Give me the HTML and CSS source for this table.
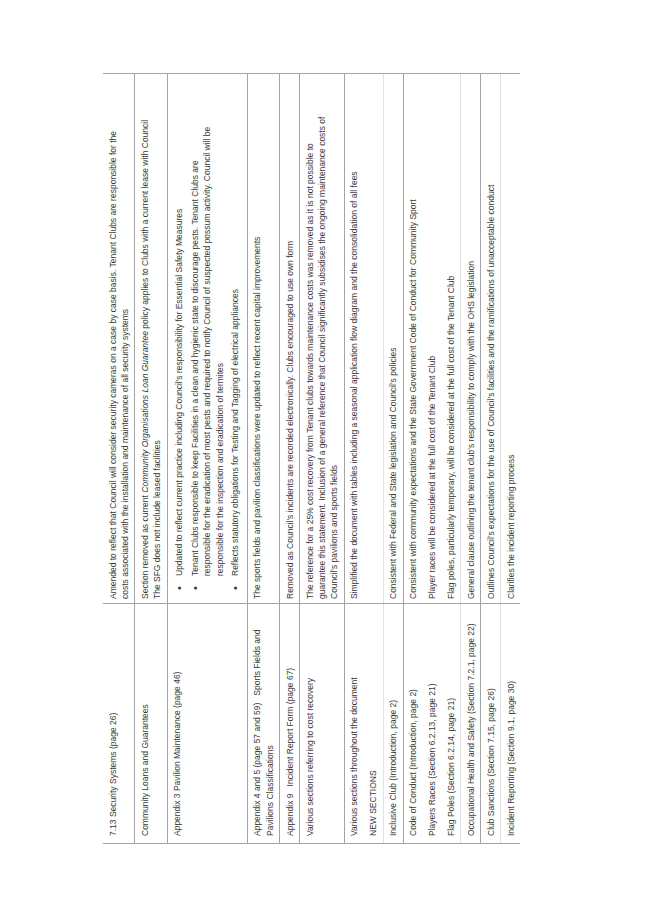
FILE: index.html
```html
<!DOCTYPE html>
<html lang="en">
<head>
<meta charset="utf-8">
<title>Changes</title>
<link rel="stylesheet" href="styles.css">
</head>
<body>
<div class="page">
  <div class="sheet">
    <table class="changes">
      <colgroup><col class="c-item"><col class="c-desc"></colgroup>
      <tbody>
        <tr>
          <td>7.13 Security Systems (page 26)</td>
          <td>Amended to reflect that Council will consider security cameras on a case by case basis. Tenant Clubs are responsible for the<br>costs associated with the installation and maintenance of all security systems</td>
        </tr>
        <tr>
          <td>Community Loans and Guarantees</td>
          <td>Section removed as current <i>Community Organisations Loan Guarantee</i> policy applies to Clubs with a current lease with Council<br>The SFG does not include leased facilities</td>
        </tr>
        <tr>
          <td>Appendix 3 Pavilion Maintenance (page 46)</td>
          <td>
            <ul class="points">
              <li><span>Updated to reflect current practice including Council's responsibility for Essential Safety Measures</span></li>
              <li><span>Tenant Clubs responsible to keep Facilities in a clean and hygienic state to discourage pests. Tenant Clubs are<br>responsible for the eradication of most pests and required to notify Council of suspected possum activity. Council will be<br>responsible for the inspection and eradication of termites</span></li>
              <li><span>Reflects statutory obligations for Testing and Tagging of electrical appliances</span></li>
            </ul>
          </td>
        </tr>
        <tr>
          <td>Appendix 4 and 5 (page 57 and 59) &nbsp; Sports Fields and<br>Pavilions Classifications</td>
          <td>The sports fields and pavilion classifications were updated to reflect recent capital improvements</td>
        </tr>
        <tr>
          <td>Appendix 9 &nbsp; Incident Report Form (page 67)</td>
          <td>Removed as Council's incidents are recorded electronically. Clubs encouraged to use own form</td>
        </tr>
        <tr>
          <td>Various sections referring to cost recovery</td>
          <td>The reference for a 25% cost recovery from Tenant clubs towards maintenance costs was removed as it is not possible to<br>guarantee this statement. Inclusion of a general reference that Council significantly subsidises the ongoing maintenance costs of<br>Council's pavilions and sports fields</td>
        </tr>
        <tr>
          <td>Various sections throughout the document</td>
          <td>Simplified the document with tables including a seasonal application flow diagram and the consolidation of all fees</td>
        </tr>
        <tr class="nb">
          <td>NEW SECTIONS</td>
          <td></td>
        </tr>
        <tr class="lt">
          <td>Inclusive Club (Introduction, page 2)</td>
          <td>Consistent with Federal and State legislation and Council's policies</td>
        </tr>
        <tr>
          <td>Code of Conduct (Introduction, page 2)</td>
          <td>Consistent with community expectations and the State Government Code of Conduct for Community Sport</td>
        </tr>
        <tr class="nb">
          <td>Players Races (Section 6.2.13, page 21)</td>
          <td>Player races will be considered at the full cost of the Tenant Club</td>
        </tr>
        <tr class="nb">
          <td>Flag Poles (Section 6.2.14, page 21)</td>
          <td>Flag poles, particularly temporary, will be considered at the full cost of the Tenant Club</td>
        </tr>
        <tr class="lt">
          <td>Occupational Health and Safety (Section 7.2.1, page 22)</td>
          <td>General clause outlining the tenant club's responsibility to comply with the OHS legislation</td>
        </tr>
        <tr>
          <td>Club Sanctions (Section 7.15, page 26)</td>
          <td>Outlines Council's expectations for the use of Council's facilities and the ramifications of unacceptable conduct</td>
        </tr>
        <tr class="lt">
          <td>Incident Reporting (Section 9.1, page 30)</td>
          <td>Clarifies the incident reporting process</td>
        </tr>
      </tbody>
    </table>
  </div>
</div>
</body>
</html>
```

FILE: styles.css
```css
html, body {
  margin: 0;
  padding: 0;
  background: #ffffff;
  overflow: hidden;
}

.page {
  width: 653px;
  height: 923px;
  box-sizing: border-box;
  padding: 74px 0 0 102.7px;
}

/* table is laid out normally, then turned to read bottom-to-top */
.sheet {
  width: 770px;
  transform-origin: 0 0;
  transform: rotate(-90deg) translateX(-100%);
}

.changes {
  width: 770px;
  table-layout: fixed;
  border-collapse: collapse;
  font-family: "Liberation Sans", Arial, sans-serif;
  font-size: 8.5px;
  line-height: 12.3px;
  color: #383838;
}

.c-item { width: 240px; }
.c-desc { width: 530px; }

.changes td {
  vertical-align: top;
  white-space: nowrap;
  padding: 3.7px 4px 3px 4px;
  border-left: 1px solid #a4a4a4;
  border-right: 1px solid #a4a4a4;
}

.changes td:first-child {
  padding-left: 7px;
}

.changes tr + tr td {
  border-top: 1px solid #a4a4a4;
}

.changes tr.lt td {
  border-top-color: #e2e2e2;
}

.changes tr.nb td {
  border-top: none;
}

.points {
  list-style: none;
  margin: 2px 0 2px 0;
  padding: 0;
}

.points li {
  display: flex;
  margin-bottom: 3.5px;
}

.points li:last-child {
  margin-bottom: 0;
}

.points li::before {
  content: "\2022";
  flex: 0 0 23px;
  box-sizing: border-box;
  padding-left: 9px;
  font-size: 11px;
}
```
